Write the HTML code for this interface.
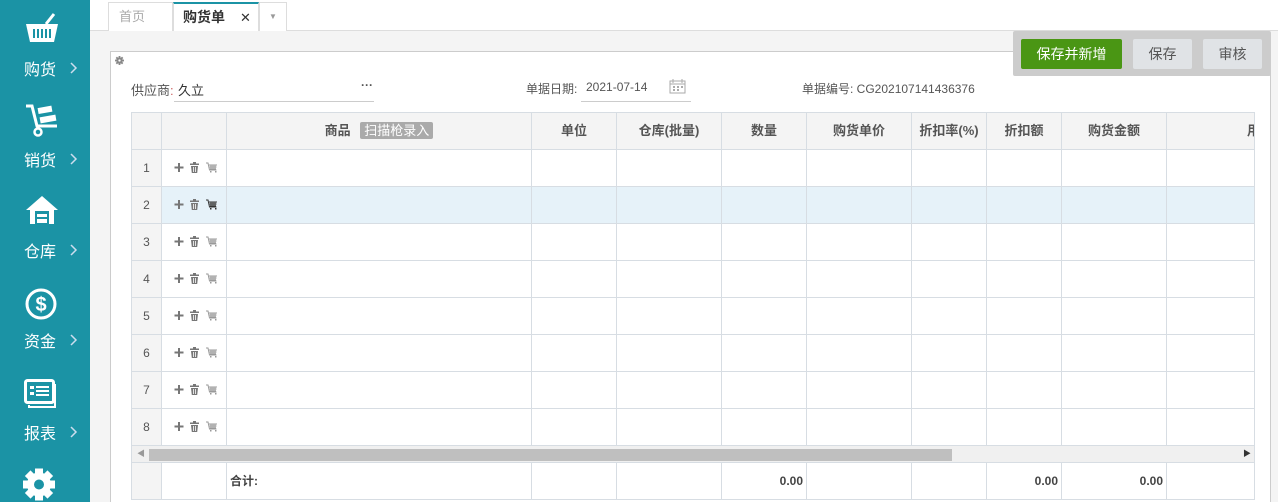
<!DOCTYPE html>
<html><head><meta charset="utf-8"><style>
*{margin:0;padding:0;box-sizing:border-box}
html,body{width:1278px;height:502px;overflow:hidden}
body{background:#f4f4f4;font-family:"Liberation Sans","Noto Sans CJK SC",sans-serif;font-size:12px;color:#555;position:relative}
.side{position:absolute;left:0;top:0;width:90px;height:502px;background:#1b93a5}
.si{position:absolute;left:0;width:90px;color:#fff;font-size:16px}
.si .t{position:absolute;left:24px;}
.si svg.a{position:absolute;left:70px;top:6px}
.tabs{position:absolute;left:90px;top:0;right:0;height:31px;background:#fff;border-bottom:1px solid #ddd}
.tab{position:absolute;top:2px;height:29px;border:1px solid #ddd;border-bottom:none;background:#fff;line-height:27px;font-size:13px}
.panel{position:absolute;left:110px;top:51px;width:1161px;height:460px;background:#fff;border:1px solid #ccc}
.abs{position:absolute}
.grid{position:absolute;left:131px;top:112px;width:1124px;height:388px;overflow:hidden;border:1px solid #d7dde3}
.c{position:absolute;border-right:1px solid #d7dde3;border-bottom:1px solid #d7dde3}
.h{background:#f4f4f4;font-weight:bold;color:#555;text-align:center;line-height:36px;font-size:13px}
.btn{position:absolute;top:39px;height:30px;line-height:30px;text-align:center;font-size:14px;border-radius:2px}
</style></head><body>
<div class="side">
<svg class="abs" style="left:24px;top:12px" width="36" height="32" viewBox="0 0 36 32"><path d="M2 12h32l-4 18H6z" fill="#fff"/><path d="M22 12 30 2" stroke="#fff" stroke-width="3" fill="none"/><g stroke="#1b93a5" stroke-width="2"><path d="M10 17v9M14 17v9M18 17v9M22 17v9M26 17v9"/></g></svg>
<div class="si" style="top:56px"><span class="t">购货</span><svg class="a" width="8" height="12" viewBox="0 0 8 12"><path d="M1 1l5 5-5 5" stroke="#cde" stroke-width="1.5" fill="none"/></svg></div>
<svg class="abs" style="left:24px;top:103px" width="36" height="34" viewBox="0 0 36 34"><path d="M2 3h6l5 20h20" stroke="#fff" stroke-width="3" fill="none"/><rect x="14" y="4" width="14" height="6" fill="#fff" transform="rotate(-10 20 7)"/><rect x="16" y="13" width="16" height="6" fill="#fff" transform="rotate(-10 24 16)"/><circle cx="14" cy="29" r="3.5" stroke="#fff" stroke-width="2.5" fill="none"/></svg>
<div class="si" style="top:147px"><span class="t">销货</span><svg class="a" width="8" height="12" viewBox="0 0 8 12"><path d="M1 1l5 5-5 5" stroke="#cde" stroke-width="1.5" fill="none"/></svg></div>
<svg class="abs" style="left:25px;top:194px" width="34" height="32" viewBox="0 0 34 32"><path d="M17 2 1 16h4v14h24V16h4z" fill="#fff"/><rect x="10" y="17" width="14" height="13" fill="#1b93a5"/><rect x="12" y="20" width="10" height="3" fill="#fff"/><rect x="12" y="25" width="10" height="4" fill="#fff"/></svg>
<div class="si" style="top:238px"><span class="t">仓库</span><svg class="a" width="8" height="12" viewBox="0 0 8 12"><path d="M1 1l5 5-5 5" stroke="#cde" stroke-width="1.5" fill="none"/></svg></div>
<svg class="abs" style="left:24px;top:287px" width="34" height="34" viewBox="0 0 34 34"><circle cx="17" cy="17" r="14" stroke="#fff" stroke-width="3" fill="none"/><text x="17" y="24" text-anchor="middle" fill="#fff" font-size="20" font-weight="bold" font-family="Liberation Sans">$</text></svg>
<div class="si" style="top:328px"><span class="t">资金</span><svg class="a" width="8" height="12" viewBox="0 0 8 12"><path d="M1 1l5 5-5 5" stroke="#cde" stroke-width="1.5" fill="none"/></svg></div>
<svg class="abs" style="left:24px;top:379px" width="34" height="30" viewBox="0 0 34 30"><rect x="1.5" y="1.5" width="28" height="22" rx="2" stroke="#fff" stroke-width="3" fill="none"/><path d="M5 26v2h26V6h-2" stroke="#fff" stroke-width="2" fill="none"/><rect x="6" y="7" width="4" height="3" fill="#fff"/><rect x="6" y="13" width="4" height="3" fill="#fff"/><path d="M12 8h13M12 12h13M12 16h13" stroke="#fff" stroke-width="2"/></svg>
<div class="si" style="top:420px"><span class="t">报表</span><svg class="a" width="8" height="12" viewBox="0 0 8 12"><path d="M1 1l5 5-5 5" stroke="#cde" stroke-width="1.5" fill="none"/></svg></div>
<svg class="abs" style="left:22px;top:467px" width="34" height="35" viewBox="0 0 34 34"><g fill="#fff"><circle cx="17" cy="17" r="12"/><rect x="13" y="1" width="8" height="32"/><rect x="1" y="13" width="32" height="8"/><rect x="13" y="1" width="8" height="32" transform="rotate(45 17 17)"/><rect x="13" y="1" width="8" height="32" transform="rotate(-45 17 17)"/></g><circle cx="17" cy="17" r="5" fill="#1b93a5"/></svg>
</div>
<div class="tabs">
<div class="tab" style="left:18px;width:65px;color:#aaa;padding-left:10px">首页</div>
<div class="tab" style="left:83px;width:86px;border-top:2px solid #1b93a5;padding-left:9px;color:#333;font-weight:bold;font-size:14px">购货单<span style="position:absolute;left:66px;font-weight:normal;font-size:13px">✕</span></div>
<div class="tab" style="left:169px;width:28px;text-align:center;color:#999;font-size:8px">▼</div>
</div>
<div class="panel">
<svg class="abs" style="left:4px;top:4px" width="9" height="9" viewBox="0 0 10 10"><g fill="#888"><circle cx="5" cy="5" r="3.5"/><rect x="4" y="0" width="2" height="10"/><rect x="0" y="4" width="10" height="2"/><rect x="4" y="0" width="2" height="10" transform="rotate(45 5 5)"/><rect x="4" y="0" width="2" height="10" transform="rotate(-45 5 5)"/></g><circle cx="5" cy="5" r="1.3" fill="#fff"/></svg>
<div class="abs" style="left:20px;top:28px;font-size:13px">供应商<span style="color:#c66">:</span></div>
<div class="abs" style="left:67px;top:28px;font-size:13px;color:#333">久立</div>
<div class="abs" style="left:250px;top:26px;font-weight:bold">···</div>
<div class="abs" style="left:63px;top:49px;width:200px;border-top:1px solid #ccc"></div>
<div class="abs" style="left:415px;top:28px">单据日期:</div>
<div class="abs" style="left:475px;top:28px">2021-07-14</div>
<svg class="abs" style="left:558px;top:26px" width="17" height="16" viewBox="0 0 17 16"><rect x="1" y="3" width="15" height="12" fill="none" stroke="#aaa"/><path d="M4 1v4M13 1v4M1 6h15" stroke="#aaa"/><g fill="#aaa"><rect x="4" y="8" width="2" height="2"/><rect x="8" y="8" width="2" height="2"/><rect x="12" y="8" width="2" height="2"/><rect x="4" y="11" width="2" height="2"/><rect x="8" y="11" width="2" height="2"/></g></svg>
<div class="abs" style="left:470px;top:49px;width:110px;border-top:1px solid #ccc"></div>
<div class="abs" style="left:691px;top:28px">单据编号: CG202107141436376</div>
</div>
<div class="grid" id="g"></div>
<div class="abs" style="left:1013px;top:31px;width:258px;height:45px;background:#ccc;border-radius:2px"></div>
<div class="btn" style="left:1021px;width:101px;background:#4a9614;color:#fff">保存并新增</div>
<div class="btn" style="left:1133px;width:59px;background:#e0e3e6;color:#555">保存</div>
<div class="btn" style="left:1203px;width:59px;background:#e0e3e6;color:#555">审核</div>
<script>
var g=document.getElementById('g'),x=[0,30,95,400,485,590,675,780,855,930,1035,1200],
hd=['','','商品','单位','仓库(批量)','数量','购货单价','折扣率(%)','折扣额','购货金额',''],h='';
function ic(dark){var c=dark?'#333':'#999';return '<svg style="position:absolute;left:12px;top:12px" width="45" height="12" viewBox="0 0 45 12"><path d="M5 1v9M0.5 5.5h9" stroke="#777" stroke-width="2"/><g fill="#777"><rect x="16" y="1.5" width="9" height="1.5"/><rect x="19" y="0" width="3" height="2"/><path d="M17 4h7l-0.8 7h-5.4z"/></g><g stroke="#fff" stroke-width="0.8"><path d="M19.5 5v5M21.5 5v5"/></g><g stroke="'+c+'" stroke-width="1" fill="none"><path d="M32 1h2l1.5 7h7"/><path d="M35 3h8M35.5 5h7M36 7h6M37 3v4M39 3v4M41 3v4"/></g><g fill="'+c+'"><rect x="36" y="9" width="1.5" height="1.5"/><rect x="41" y="9" width="1.5" height="1.5"/></g></svg>';}
for(var i=0;i<11;i++){var w=x[i+1]-x[i];
h+='<div class="c h" style="left:'+x[i]+'px;top:0;width:'+w+'px;height:37px">'+hd[i]+(i==2?' <span style="background:#aaa;color:#fff;font-weight:normal;padding:1px 4px;border-radius:2px;margin-left:6px">扫描枪录入</span>':'')+(i==10?'<span style="position:absolute;left:80px">用</span>':'')+'</div>';}
for(var r=0;r<8;r++){var t=37+r*37;
for(var i=0;i<11;i++){var w=x[i+1]-x[i],bg=i==0?'#f4f4f4':(r==1?'#e6f2f9':'#fff'),ct='';
if(i==0)ct='<div style="text-align:center;line-height:36px;color:#555">'+(r+1)+'</div>';
if(i==1)ct=ic(r==1);
h+='<div class="c" style="left:'+x[i]+'px;top:'+t+'px;width:'+w+'px;height:37px;background:'+bg+'">'+ct+'</div>';}}
h+='<div class="abs" style="left:0;top:333px;width:1124px;height:17px;background:#f0f0f0;border-bottom:1px solid #d7dde3"><div class="abs" style="left:17px;top:3px;width:803px;height:12px;background:#bfbfbf"></div><span class="abs" style="left:5px;top:2px;font-size:8px;color:#999">◀</span><span class="abs" style="left:1111px;top:2px;font-size:8px;color:#333">▶</span></div>';
var f={2:'合计:',5:'0.00',8:'0.00',9:'0.00'};
for(var i=0;i<11;i++){var w=x[i+1]-x[i];
h+='<div class="c" style="left:'+x[i]+'px;top:350px;width:'+w+'px;height:37px;background:'+(i==0?'#f4f4f4':'#fff')+';line-height:36px;font-weight:bold;color:#444;padding:0 3px;text-align:'+(i==2?'left':'right')+'">'+(f[i]||'')+'</div>';}
g.innerHTML=h;
</script>
</body></html>
